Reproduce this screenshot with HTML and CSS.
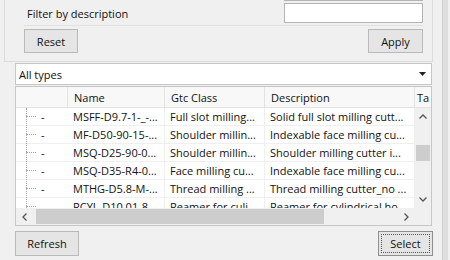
FILE: index.html
```html
<!DOCTYPE html>
<html>
<head>
<meta charset="utf-8">
<link rel="stylesheet" href="styles.css">
</head>
<body>
<div class="window">
  <div class="content">
    <div class="filter-group">
      <div class="prev-input"></div>
      <div class="filter-row">
        <span class="label">Filter by description</span>
        <div class="input"></div>
      </div>
      <div class="sep"></div>
      <div class="btn-row">
        <button class="btn btn-reset">Reset</button>
        <button class="btn btn-apply">Apply</button>
      </div>
    </div>
    <div class="main">
      <div class="combo">
        <span>All types</span>
        <svg class="combo-arrow" width="7" height="4" viewBox="0 0 7 4"><polygon points="0,0 7,0 3.5,4" fill="#222"/></svg>
      </div>
      <div class="table">
        <div class="thead">
          <div class="th th-tree"></div>
          <div class="th">Name</div>
          <div class="th">Gtc Class</div>
          <div class="th">Description</div>
          <div class="th th-ta">Ta</div>
        </div>
        <div class="tbody">
          <div class="rows">
            <div class="tree-line"></div>
            <div class="row">
              <div class="td td-tree"><span class="branch"></span><span class="dash">-</span></div>
              <div class="td">MSFF-D9.7-1-_-...</div>
              <div class="td">Full slot milling...</div>
              <div class="td">Solid full slot milling cutt...</div>
            </div>
            <div class="row">
              <div class="td td-tree"><span class="branch"></span><span class="dash">-</span></div>
              <div class="td">MF-D50-90-15-...</div>
              <div class="td">Shoulder millin...</div>
              <div class="td">Indexable face milling cu...</div>
            </div>
            <div class="row">
              <div class="td td-tree"><span class="branch"></span><span class="dash">-</span></div>
              <div class="td">MSQ-D25-90-0...</div>
              <div class="td">Shoulder millin...</div>
              <div class="td">Shoulder milling cutter i...</div>
            </div>
            <div class="row">
              <div class="td td-tree"><span class="branch"></span><span class="dash">-</span></div>
              <div class="td">MSQ-D35-R4-0...</div>
              <div class="td">Face milling cu...</div>
              <div class="td">Indexable face milling cu...</div>
            </div>
            <div class="row">
              <div class="td td-tree"><span class="branch"></span><span class="dash">-</span></div>
              <div class="td">MTHG-D5.8-M-...</div>
              <div class="td">Thread milling ...</div>
              <div class="td">Thread milling cutter_no ...</div>
            </div>
            <div class="row">
              <div class="td td-tree"><span class="branch"></span><span class="dash">-</span></div>
              <div class="td">RCYL-D10.01-8...</div>
              <div class="td">Reamer for culi...</div>
              <div class="td">Reamer for cylindrical ho...</div>
            </div>
          </div>
          <div class="vscroll">
            <svg class="arr" width="8" height="5" viewBox="0 0 8 5"><polyline points="0.5,4.5 4,1 7.5,4.5" fill="none" stroke="#555" stroke-width="1.3"/></svg>
            <div class="vtrack"><div class="vthumb"></div></div>
            <svg class="arr" width="8" height="5" viewBox="0 0 8 5"><polyline points="0.5,0.5 4,4 7.5,0.5" fill="none" stroke="#555" stroke-width="1.3"/></svg>
          </div>
        </div>
        <div class="tfoot">
          <div class="hscroll">
            <svg class="harr" width="5" height="8" viewBox="0 0 5 8"><polyline points="4.5,0.5 1,4 4.5,7.5" fill="none" stroke="#555" stroke-width="1.3"/></svg>
            <div class="htrack"><div class="hthumb"></div></div>
            <svg class="harr" width="5" height="8" viewBox="0 0 5 8"><polyline points="0.5,0.5 4,4 0.5,7.5" fill="none" stroke="#555" stroke-width="1.3"/></svg>
          </div>
          <div class="corner"></div>
        </div>
      </div>
      <div class="bottom-row">
        <button class="btn btn-refresh">Refresh</button>
        <button class="btn btn-select"><span class="focus">Select</span></button>
      </div>
    </div>
  </div>
  <div class="edge"></div>
</div>
</body>
</html>
```

FILE: styles.css
```css
html, body {
  margin: 0;
  padding: 0;
  background: #f0f0f0;
}
body {
  font-family: "Open Sans", "Noto Sans", sans-serif;
  font-size: 11px;
  color: #111;
}
.window {
  width: 450px;
  height: 260px;
  overflow: hidden;
  display: flex;
}
.content {
  width: 442px;
  flex: none;
}
.edge {
  width: 5px;
  flex: none;
  background: #dedede;
  border-left: 1px solid #d0d0d0;
}

/* filter group */
.filter-group {
  margin-left: 4px;
  height: 61px;
  border-left: 1px solid #dcdcdc;
  border-right: 1px solid #dcdcdc;
  border-bottom: 1px solid #dcdcdc;
  padding: 0 9px 0 19px;
  width: 399px;
}
.prev-input {
  margin-left: 260px;
  width: 139px;
  height: 1px;
  background: #b4b4b4;
}
.filter-row {
  margin-top: 2px;
  height: 20px;
  display: flex;
  align-items: center;
  justify-content: space-between;
}
.label {
  margin-left: 3px;
}
.input {
  width: 137px;
  height: 18px;
  background: #fff;
  border: 1px solid #b4b4b4;
}
.sep {
  margin-top: 2px;
  height: 1px;
  background: #e0e0e0;
}
.btn-row {
  margin-top: 3px;
  display: flex;
  justify-content: space-between;
}
.btn {
  font-family: inherit;
  font-size: 11px;
  color: #111;
  background: #e5e5e5;
  border: 1px solid #b9b9b9;
  border-radius: 0;
  padding: 0;
  margin: 0;
  height: 24px;
}
.btn-reset { width: 54px; }
.btn-apply { width: 55px; }

/* main */
.main {
  margin-left: 15px;
  width: 417px;
}
.combo {
  margin-top: 1px;
  height: 20px;
  background: #fff;
  border: 1px solid #c6c6c6;
  display: flex;
  align-items: center;
  justify-content: space-between;
  padding: 0 5px 0 3px;
}
.combo-arrow { display: block; }

/* table */
.table {
  margin-top: 1px;
  border: 1px solid #c6c6c6;
  background: #fff;
}
.thead {
  height: 20px;
  border-bottom: 1px solid #e2e2e2;
  display: grid;
  grid-template-columns: 52px 97px 100px 150px 16px;
  background: #f8f8f8;
}
.th {
  border-right: 1px solid #e2e2e2;
  padding-left: 6px;
  line-height: 21px;
  white-space: nowrap;
  overflow: hidden;
}
.th-tree { padding: 0; }
.th-ta { border-right: 0; padding-left: 2px; }

.tbody {
  height: 100px;
  display: flex;
}
.rows {
  width: 399px;
  position: relative;
  overflow: hidden;
}
.tree-line {
  position: absolute;
  left: 10px;
  top: 0;
  bottom: 0;
  border-left: 1px dotted #a8a8a8;
}
.row {
  height: 17px;
  border-bottom: 1px solid #efefef;
  display: grid;
  grid-template-columns: 52px 97px 100px 150px;
}
.td {
  border-right: 1px solid #efefef;
  padding-left: 5px;
  line-height: 18px;
  white-space: nowrap;
  overflow: hidden;
}
.td-tree {
  padding-left: 10px;
  display: flex;
  align-items: center;
  border-right: 0;
}
.branch {
  width: 10px;
  border-top: 1px dotted #a8a8a8;
}
.dash {
  margin-left: 5px;
}
.vscroll {
  width: 16px;
  background: #f0f0f0;
  display: flex;
  flex-direction: column;
  align-items: center;
}
.arr { display: block; margin: 6px 0; }
.vtrack {
  flex: 1;
  width: 100%;
}
.vthumb {
  margin: 20px 1px 0 1px;
  height: 16px;
  background: #cdcdcd;
}
.tfoot {
  height: 17px;
  display: flex;
}
.hscroll {
  width: 399px;
  background: #f0f0f0;
  display: flex;
  align-items: center;
}
.harr { display: block; margin: 0 6px; }
.htrack {
  flex: 1;
  height: 100%;
  display: flex;
  align-items: center;
}
.hthumb {
  margin-left: 3px;
  width: 288px;
  height: 15px;
  background: #cdcdcd;
}
.corner {
  width: 16px;
  background: #f0f0f0;
}

/* bottom */
.bottom-row {
  margin-top: 5px;
  display: flex;
  justify-content: space-between;
}
.btn-refresh { width: 64px; height: 25px; }
.btn-select {
  width: 55px;
  height: 25px;
  margin-right: -1px;
  border-color: #8f8f8f;
  padding: 2px;
}
.focus {
  display: flex;
  align-items: center;
  justify-content: center;
  height: 100%;
  border: 1px dotted #555;
  box-sizing: border-box;
}
```
